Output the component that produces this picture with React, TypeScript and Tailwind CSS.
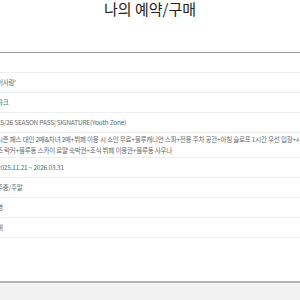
const rows: { text: string; lines?: string[] }[] = [
    { text: '' },
    { text: '이사랑\'' },
    { text: '파크' },
    { text: '25/26 SEASON PASS| SIGNATURE(Youth Zone)' },
    {
        text: '',
        lines: [
            '시즌 패스 대인 2매&차녀 2매+뷔페 이용 시 소인 무료+블루캐니언 스파+전용 주차 공간+아침 슬로프 1시간 우선 입장+시',
            '즈 락커+블루동 스카이 로얄 숙박권+조식 뷔페 이용권+블루동 사우나',
        ],
    },
    { text: '2025.11.21 ~ 2026.03.31' },
    { text: '주중/주말' },
    { text: '명' },
    { text: '매' },
];

export default function App() {
    return (
        <div className="w-[300px] h-[300px] overflow-hidden bg-white flex flex-col font-['Noto_Sans_CJK_KR','Noto_Sans',sans-serif]">
            <div className="h-[53px] shrink-0 border-b border-[#9a9a9a]">
                <h1 className="text-center text-[15px] leading-[18px] text-[#222]">나의 예약/구매</h1>
            </div>

            <div className="flex flex-col">
                {rows.map((row, i) => (
                    <div
                        key={i}
                        className={`${row.lines ? 'h-[25px]' : 'h-[20px]'} flex flex-col justify-center border-b border-[#efefef] -ml-[3px] text-[6.5px] tracking-[-0.2px] text-[#666] whitespace-nowrap`}
                    >
                        {row.lines ? (
                            row.lines.map((line, j) => (
                                <span key={j} className="leading-[11px]">{line}</span>
                            ))
                        ) : (
                            <span className="leading-[11px]">{row.text}</span>
                        )}
                    </div>
                ))}
            </div>

            <div className="flex-1" />
            <div className="h-[2px] shrink-0 bg-[#b3b3b3]" />
            <div className="h-[17px] shrink-0 bg-[#f2f2f2]" />
        </div>
    );
}
